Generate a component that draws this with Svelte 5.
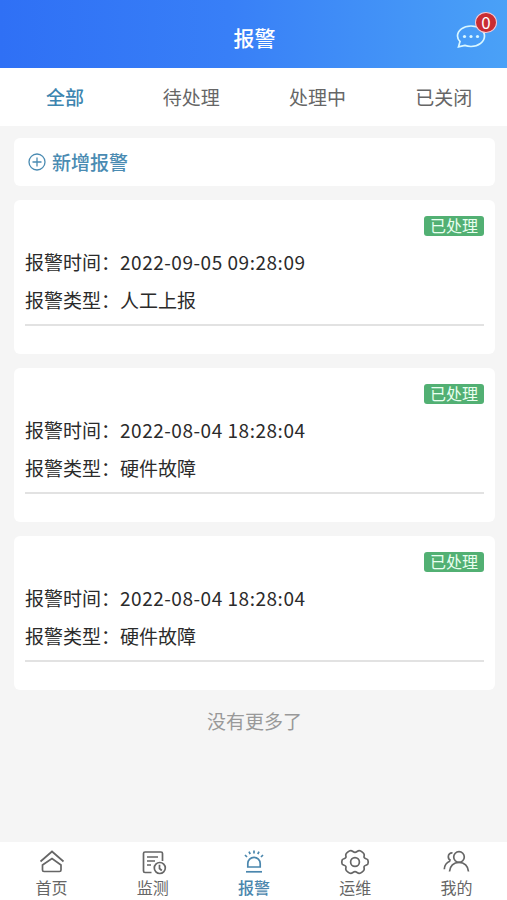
<script>
    // Tabs at the top of the page
    const tabs = ['全部', '待处理', '处理中', '已关闭'];
    let activeTab = $state(0);

    // Alarm records
    const alarms = [
        { id: 1, time: '2022-09-05 09:28:09', type: '人工上报', status: '已处理' },
        { id: 2, time: '2022-08-04 18:28:04', type: '硬件故障', status: '已处理' },
        { id: 3, time: '2022-08-04 18:28:04', type: '硬件故障', status: '已处理' },
    ];

    // Bottom navigation
    const navItems = [
        { icon: 'home', label: '首页' },
        { icon: 'monitor', label: '监测' },
        { icon: 'alarm', label: '报警' },
        { icon: 'gear', label: '运维' },
        { icon: 'user', label: '我的' },
    ];
    let activeNav = $state('alarm');

    let unread = $state(0);
</script>

<div class="page">
    <header>
        <h1>报警</h1>
        <div class="message">
            <svg width="30" height="26" viewBox="0 0 30 26">
                <path d="M4 17.500C2.300 16 1.500 14 1.500 12 1.500 6.200 7.400 2 15 2s13.500 4.200 13.500 10S22.600 22.500 15 22.500c-2.200 0-4.300-.4-6.200-1.100L2.500 22.800z" />
                <circle class="dot" cx="8.500" cy="12.500" r="1.600" />
                <circle class="dot" cx="15" cy="12.500" r="1.600" />
                <circle class="dot" cx="21.500" cy="12.500" r="1.600" />
            </svg>
            <span class="count">{unread}</span>
        </div>
    </header>

    <nav class="tabs">
        {#each tabs as tab, i}
            <button class:active={activeTab === i} onclick={() => (activeTab = i)}>{tab}</button>
        {/each}
    </nav>

    <main>
        <button class="add">
            <svg width="18" height="18" viewBox="0 0 18 18">
                <circle cx="9" cy="9" r="8" />
                <path d="M9 4.500v9M4.500 9h9" />
            </svg>
            <span>新增报警</span>
        </button>

        {#each alarms as alarm (alarm.id)}
            <section class="card">
                <span class="status">{alarm.status}</span>
                <div class="info">
                    <div class="row"><span class="label">报警时间：</span><span class="time">{alarm.time}</span></div>
                    <div class="row"><span class="label">报警类型：</span><span>{alarm.type}</span></div>
                </div>
            </section>
        {/each}

        <p class="end">没有更多了</p>
    </main>

    <nav class="bottom">
        {#each navItems as item}
            <button class:active={activeNav === item.icon} onclick={() => (activeNav = item.icon)}>
                <svg width="30" height="26" viewBox="0 0 30 26">
                    {#if item.icon === 'home'}
                        <path d="M3.500 12.500 15 2.500l11.500 10" />
                        <path d="M5.500 16 15 9.500l9 6.500v5a1.500 1.500 0 0 1-1.500 1.500H7A1.500 1.500 0 0 1 5.500 21z" />
                    {:else if item.icon === 'monitor'}
                        <path d="M13.500 23.500H7A1.500 1.500 0 0 1 5.500 22V4.500A1.500 1.500 0 0 1 7 3h16A1.500 1.500 0 0 1 24.500 4.500V12" />
                        <path d="M9 8h11M9 12h8M9 16h4" />
                        <circle cx="21.800" cy="19" r="5.500" />
                        <path d="M21.500 15.800v3.700l2.300 2" />
                    {:else if item.icon === 'alarm'}
                        <path d="M8.800 18V14.500a6.200 6.200 0 0 1 12.400 0V18z" />
                        <path d="M7 22.800h16" />
                        <path d="M15 1.500v3M10 2.700l1.200 2.500M20 2.700l-1.200 2.500M6 6l2 2M24 6l-2 2" />
                    {:else if item.icon === 'gear'}
                        <path d="M15 3.300C16.800 3.300 17.400 1.700 19.200 1.700S24 4 24.200 5.700 23.600 7.600 24.200 8.700 27.200 9.600 27.800 10.800C28.400 12.200 28.400 13.800 27.800 15.200 27.200 16.400 24.800 16.200 24.200 17.300S24.400 18.600 24.200 20.300 21 24.300 19.200 24.300 16.800 22.700 15 22.700 12.600 24.300 10.800 24.300 6 22 5.800 20.300 6.400 18.400 5.800 17.300 2.800 16.400 2.200 15.200C1.600 13.800 1.600 12.200 2.200 10.800 2.800 9.600 5.200 9.800 5.800 8.700S5.600 7.400 5.800 5.700 9 1.700 10.800 1.700 13.200 3.300 15 3.300z" />
                        <circle cx="15" cy="13" r="4.400" />
                    {:else}
                        <circle cx="18" cy="8" r="5.300" />
                        <path d="M8.500 22.500c.3-5.500 4.200-9.200 9.500-9.200s9.200 3.700 9.500 9.200" />
                        <path d="M11.500 3.800C9 3.600 7.300 5.500 7.300 7.700c0 1.700.9 3 2.400 3.700M9.200 12C5.500 13.400 3.500 16.200 3.300 20.200" />
                    {/if}
                </svg>
                <span>{item.label}</span>
            </button>
        {/each}
    </nav>
</div>

<style>
    :global(body) {
        margin: 0;
    }

    .page {
        display: flex;
        flex-direction: column;
        height: 900px;
        background: #f5f5f5;
        color: #2b2b2b;
        font-family: 'Noto Sans CJK SC', sans-serif;
        font-size: 19px;
    }

    button {
        margin: 0;
        padding: 0;
        border: none;
        background: none;
        color: inherit;
        font: inherit;
        cursor: pointer;
    }

    svg {
        display: block;
        fill: none;
        stroke: currentColor;
        stroke-width: 1.7;
    }

    header {
        position: relative;
        display: flex;
        flex: none;
        align-items: center;
        justify-content: center;
        box-sizing: border-box;
        height: 68px;
        padding: 6px 0 0 2px;
        background: linear-gradient(90deg, #2f70f5 0%, #387ff7 45%, #4aa1f7 100%);
        color: #fff;
    }

    h1 {
        margin: 0;
        font-size: 21px;
        font-weight: 500;
        line-height: 30px;
    }

    .message {
        position: absolute;
        top: 24px;
        right: 21px;
        color: #d9f7ff;
    }

    .message .dot {
        fill: currentColor;
        stroke: none;
    }

    .count {
        position: absolute;
        top: -12px;
        right: -11px;
        box-sizing: border-box;
        width: 22px;
        height: 21px;
        border: 1.5px solid #f5c9d4;
        border-radius: 50%;
        background: #c92d33;
        color: #fff;
        font-size: 17px;
        line-height: 18px;
        text-align: center;
    }

    .tabs {
        display: flex;
        flex: none;
        box-sizing: border-box;
        height: 58px;
        padding: 0 0 1px 2px;
        background: #fff;
        color: #666;
    }

    .tabs button {
        flex: 1;
    }

    .tabs .active {
        color: #3d85b0;
        font-weight: 500;
    }

    main {
        display: flex;
        flex: 1;
        flex-direction: column;
        gap: 14px;
        padding: 12px 12px 0 14px;
    }

    .add {
        display: flex;
        align-items: center;
        gap: 6px;
        height: 48px;
        padding-left: 14px;
        border-radius: 6px;
        background: #fff;
        color: #4a8bb2;
        font-weight: 500;
    }

    .add svg {
        stroke-width: 1.3;
    }

    .add span {
        padding-bottom: 1px;
    }

    .card {
        display: flex;
        flex-direction: column;
        box-sizing: border-box;
        height: 154px;
        padding: 16px 11px 0;
        border-radius: 6px;
        background: #fff;
    }

    .status {
        align-self: flex-end;
        width: 60px;
        height: 20px;
        border-radius: 3px;
        background: #52b073;
        color: #e9fff0;
        font-size: 16px;
        line-height: 19px;
        text-align: center;
    }

    .info {
        padding: 7px 0 5px;
        border-bottom: 2px solid #e2e2e2;
    }

    .row {
        display: flex;
        height: 38px;
        line-height: 38px;
    }

    .label {
        width: 95px;
    }

    .time {
        letter-spacing: 0.52px;
    }

    .end {
        margin: 2px 0 0;
        color: #999;
        line-height: 30px;
        text-align: center;
    }

    .bottom {
        display: flex;
        flex: none;
        box-sizing: border-box;
        height: 58px;
        padding-left: 1px;
        background: #fff;
        color: #666;
    }

    .bottom button {
        display: flex;
        flex: 1;
        flex-direction: column;
        align-items: center;
        padding-top: 7px;
        font-size: 16px;
        line-height: 25px;
    }

    .bottom .active {
        color: #4a86ad;
        font-weight: 500;
    }
</style>
